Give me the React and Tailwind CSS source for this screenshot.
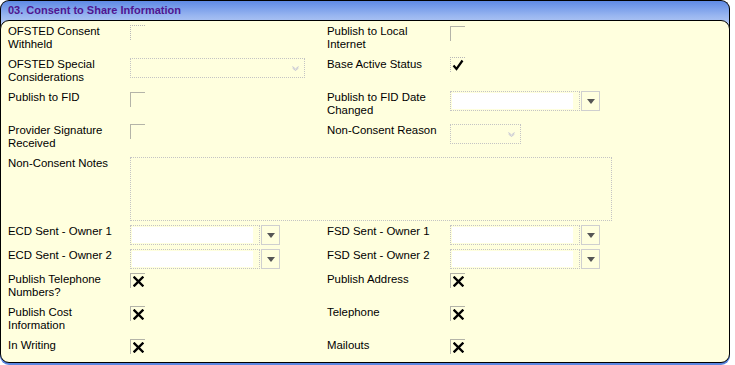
import React from "react";

const Label = ({ children }) => (
  <p className="text-[11.4px] leading-[13px] text-black">{children}</p>
);

const Check = ({ mark, dotted }) => (
  <div
    className={`w-[15px] h-[15px] border-t border-l ${
      dotted ? "border-dotted border-[#b8b8b8]" : "border-[#b4b4a8]"
    } flex items-center justify-center`}
  >
    {mark === "x" && (
      <svg width="11" height="11" viewBox="0 0 11 11">
        <path d="M1.5 1.5 L9.5 9.5 M9.5 1.5 L1.5 9.5" stroke="#000" strokeWidth="2.4" strokeLinecap="square" />
      </svg>
    )}
    {mark === "tick" && (
      <svg width="12" height="12" viewBox="0 0 12 12">
        <path d="M1.5 6.5 L4.5 10 L10.5 1.5" stroke="#000" strokeWidth="2.2" fill="none" />
      </svg>
    )}
  </div>
);

const Combo = () => (
  <div className="flex h-[20px]">
    <div className="w-[130px] h-full border border-dotted border-[#c4c4c4] p-[1px]">
      <div className="w-[121px] h-full bg-white" />
    </div>
    <div className="w-[19px] h-full border border-[#cfcfcf] flex items-center justify-center ml-[1px]">
      <svg width="8" height="5" viewBox="0 0 8 5">
        <path d="M0 0 H8 L4 5 Z" fill="#555" />
      </svg>
    </div>
  </div>
);

const DisabledCombo = ({ w }) => (
  <div className={`${w} h-[20px] border border-dotted border-[#c4c4c4] flex items-center justify-end pr-[5px]`}>
    <svg width="7" height="5" viewBox="0 0 7 5">
      <path d="M0.5 0.5 L3.5 3 L6.5 0.5 M0.5 2 L3.5 4.5 L6.5 2" stroke="#c4c4d4" strokeWidth="1" fill="none" />
    </svg>
  </div>
);

export default function App() {
  return (
    <div className="w-[730px] h-[365px] bg-white" style={{ fontFamily: '"Liberation Sans", Arial, sans-serif' }}>
      {/* Header */}
      <div className="h-[30px] rounded-t-[9px] border-t border-l border-r border-black bg-gradient-to-b from-[#5f8ae5] via-[#98b5f0] to-[#c6d6f7] px-[7px] pt-[2px]">
        <p className="text-[11px] leading-[14px] font-bold text-[#4f1590]">
          03. Consent to Share Information
        </p>
      </div>

      {/* Body */}
      <div className="-mt-[10px] h-[343px] rounded-[9px] border border-black bg-[#ffffde] shadow-[0_2px_0_0_#5a86e0] pl-[7px] pt-[4px]">
        <div className="grid grid-cols-[122px_197px_123px_1fr] grid-rows-[33px_33px_33px_33px_68px_24px_24px_33px_33px_24px]">
          <Label>OFSTED Consent<br />Withheld</Label>
          <Check dotted />
          <Label>Publish to Local<br />Internet</Label>
          <div className="pt-[1px]"><Check /></div>

          <Label>OFSTED Special<br />Considerations</Label>
          <DisabledCombo w="w-[175px]" />
          <Label>Base Active Status</Label>
          <div className="-mt-[1px]"><Check mark="tick" dotted /></div>

          <Label>Publish to FID</Label>
          <div className="pt-[1px]"><Check /></div>
          <Label>Publish to FID Date<br />Changed</Label>
          <Combo />

          <Label>Provider Signature<br />Received</Label>
          <Check />
          <Label>Non-Consent Reason</Label>
          <DisabledCombo w="w-[71px]" />

          <Label>Non-Consent Notes</Label>
          <div className="col-span-3 w-[482px] h-[64px] border border-dotted border-[#c4c4c4]" />

          <Label>ECD Sent - Owner 1</Label>
          <Combo />
          <Label>FSD Sent - Owner 1</Label>
          <Combo />

          <Label>ECD Sent - Owner 2</Label>
          <Combo />
          <Label>FSD Sent - Owner 2</Label>
          <Combo />

          <Label>Publish Telephone<br />Numbers?</Label>
          <Check mark="x" />
          <Label>Publish Address</Label>
          <Check mark="x" />

          <Label>Publish Cost<br />Information</Label>
          <Check mark="x" />
          <Label>Telephone</Label>
          <Check mark="x" />

          <Label>In Writing</Label>
          <Check mark="x" />
          <Label>Mailouts</Label>
          <Check mark="x" />
        </div>
      </div>
    </div>
  );
}
